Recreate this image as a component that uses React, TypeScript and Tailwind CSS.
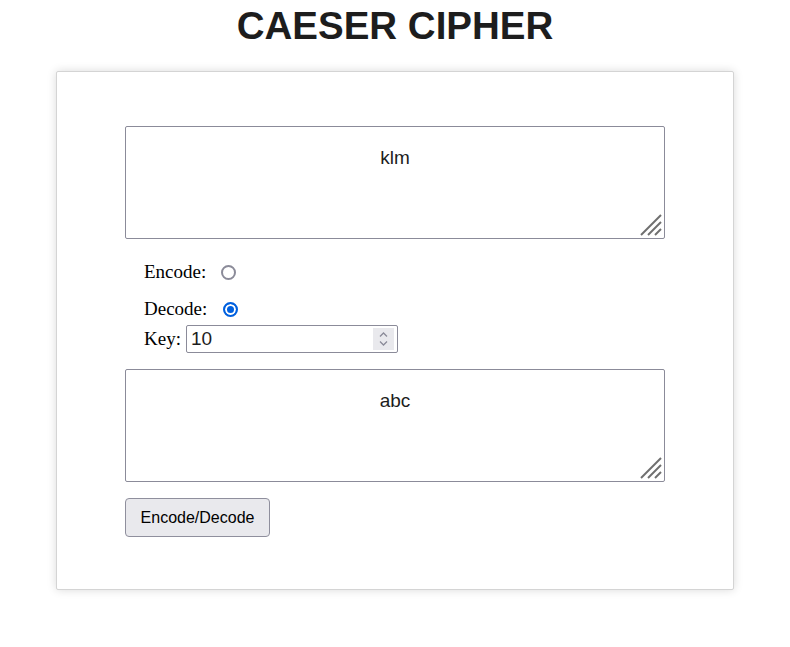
import React, { useState } from 'react';

const shift = (text: string, key: number) =>
  text.replace(/[a-z]/gi, (ch) => {
    const base = ch <= 'Z' ? 65 : 97;
    return String.fromCharCode(((((ch.charCodeAt(0) - base + key) % 26) + 26) % 26) + base);
  });

const Grip = () => (
  <svg
    className="pointer-events-none absolute bottom-[3px] right-[3px]"
    width="22"
    height="22"
    viewBox="0 0 22 22"
    stroke="#6f6f6f"
    strokeWidth="2"
  >
    <path d="M21 1 L1 21" />
    <path d="M21 8 L8 21" />
    <path d="M21 15 L15 21" />
  </svg>
);

const App: React.FC = () => {
  const [input, setInput] = useState('klm');
  const [mode, setMode] = useState<'encode' | 'decode'>('decode');
  const [key, setKey] = useState('10');
  const [output, setOutput] = useState('abc');

  const run = () => {
    const k = parseInt(key, 10) || 0;
    setOutput(shift(input, mode === 'encode' ? k : -k));
  };

  const area =
    "block h-[113px] w-[540px] resize-none rounded-[2px] border border-[#8b8b99] px-[2px] pt-[20px] text-center font-['Liberation_Sans',Arial,sans-serif] text-[19px] leading-[22px] text-[#1d1d1d] outline-none";
  const radio =
    'block h-[15px] w-[15px] shrink-0 appearance-none rounded-full border-2 border-[#8b8b99] bg-white checked:border-[#0060df] checked:bg-[#0060df] checked:shadow-[inset_0_0_0_2px_white]';

  return (
    <div className="min-h-[647px] bg-white pt-[4px] font-['Liberation_Serif',serif] text-black">
      <h1 className="text-center font-['Liberation_Sans',Arial,sans-serif] text-[38.5px] font-bold leading-[44px] text-[#1d1d1d]">
        CAESER CIPHER
      </h1>
      <div className="mx-auto mt-[23px] w-[678px] rounded-[2px] border border-[#d4d4d4] bg-white px-[68px] pb-[52px] pt-[54px] shadow-[0_0_10px_rgba(0,0,0,0.15)]">
        <div className="relative w-[540px]">
          <textarea value={input} onChange={(e) => setInput(e.target.value)} className={area} />
          <Grip />
        </div>
        <div className="mt-[21px] flex h-[24px] items-center pl-[19px] text-[19px]">
          <span>Encode:</span>
          <input
            type="radio"
            name="mode"
            checked={mode === 'encode'}
            onChange={() => setMode('encode')}
            className={`ml-[15px] ${radio}`}
          />
        </div>
        <div className="mt-[13px] flex h-[24px] items-center pl-[19px] text-[19px]">
          <span>Decode:</span>
          <input
            type="radio"
            name="mode"
            checked={mode === 'decode'}
            onChange={() => setMode('decode')}
            className={`ml-[16px] ${radio}`}
          />
        </div>
        <div className="mt-[4px] flex h-[28px] items-center pl-[19px] text-[19px]">
          <span>Key:</span>
          <div className="relative ml-[5px]">
            <input
              type="text"
              value={key}
              onChange={(e) => setKey(e.target.value)}
              className="block h-[28px] w-[212px] rounded-[2px] border border-[#8b8b99] pl-[4px] font-['Liberation_Sans',Arial,sans-serif] text-[19px] text-[#1d1d1d] outline-none"
            />
            <div className="absolute right-[4px] top-[3px] flex h-[22px] w-[21px] flex-col items-center justify-center bg-[#e9e9ed]">
              <svg width="9" height="16" viewBox="0 0 9 16" fill="none" stroke="#8b8b99" strokeWidth="1.3">
                <path d="M1 5.5 L4.5 2 L8 5.5" />
                <path d="M1 10.5 L4.5 14 L8 10.5" />
              </svg>
            </div>
          </div>
        </div>
        <div className="relative mt-[16px] w-[540px]">
          <textarea value={output} readOnly className={area} />
          <Grip />
        </div>
        <button
          onClick={run}
          className="mt-[16px] block h-[39px] w-[145px] rounded-[4px] border border-[#8f8f9d] bg-[#e9e9ed] font-['Liberation_Sans',Arial,sans-serif] text-[16px] text-black"
        >
          Encode/Decode
        </button>
      </div>
    </div>
  );
};

export default App;
